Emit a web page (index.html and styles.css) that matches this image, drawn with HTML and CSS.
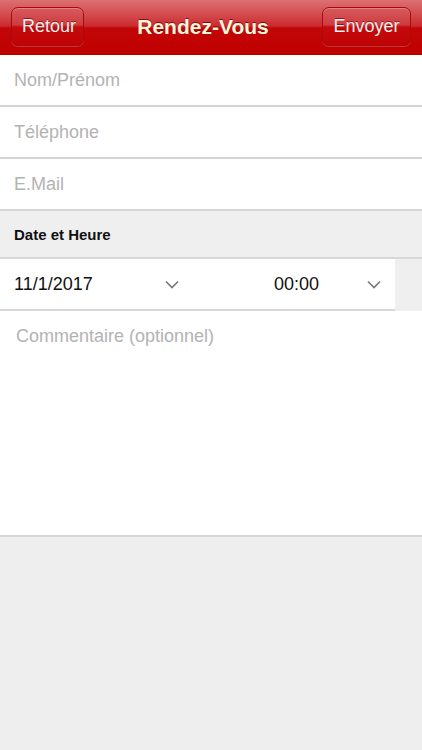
FILE: index.html
```html
<!DOCTYPE html>
<html lang="fr">
<head>
<meta charset="utf-8">
<link rel="stylesheet" href="styles.css">
</head>
<body>
<div class="app">
  <header class="bar">
    <button class="btn">Retour</button>
    <h1 class="title">Rendez-Vous</h1>
    <button class="btn">Envoyer</button>
  </header>
  <div class="field"><span class="ph">Nom/Prénom</span></div>
  <div class="field"><span class="ph">Téléphone</span></div>
  <div class="field"><span class="ph">E.Mail</span></div>
  <div class="section">Date et Heure</div>
  <div class="pickers">
    <div class="picker date">
      <span class="val">11/1/2017</span>
      <svg class="chev" width="14" height="9" viewBox="0 0 14 9"><path d="M1 1.5 L7 7.5 L13 1.5" fill="none" stroke="#777" stroke-width="1.6"/></svg>
    </div>
    <div class="picker time">
      <span class="val">00:00</span>
      <svg class="chev" width="14" height="9" viewBox="0 0 14 9"><path d="M1 1.5 L7 7.5 L13 1.5" fill="none" stroke="#777" stroke-width="1.6"/></svg>
    </div>
    <div class="gap"></div>
  </div>
  <div class="comment"><span class="ph">Commentaire (optionnel)</span></div>
  <div class="rest"></div>
</div>
</body>
</html>
```
FILE: styles.css
```css
* { box-sizing: border-box; }
html, body { margin: 0; padding: 0; }
body {
  width: 422px;
  height: 750px;
  background: #eeeeee;
  font-family: "Liberation Sans", Arial, sans-serif;
  overflow: hidden;
}
.app { display: flex; flex-direction: column; height: 750px; }
.bar {
  height: 55px;
  flex: none;
  display: flex;
  align-items: center;
  justify-content: space-between;
  padding: 0 11px 2px 11px;
  background: linear-gradient(to bottom, #dc7072 0%, #d2474b 30%, #cc2a2e 48%, #c20608 52%, #c00000 100%);
  border-bottom: 1px solid #b00000;
}
.btn {
  height: 39px;
  margin-top: 1px;
  padding: 0 10px;
  border-radius: 7px;
  border: 1px solid #a80a0c;
  background: linear-gradient(to bottom, #d65a5d 0%, #cf3c40 45%, #c30a0c 52%, #c00406 100%);
  box-shadow: inset 0 1px 0 rgba(255,255,255,0.25), 0 1px 0 rgba(255,255,255,0.2);
  color: #fbeeee;
  font-family: "Liberation Sans", Arial, sans-serif;
  font-size: 18px;
  text-shadow: 0 -1px 0 rgba(90,0,0,0.6);
}
.btn:first-child { width: 73px; }
.btn:last-child { width: 89px; }
.title {
  margin: 0;
  font-size: 21px;
  font-weight: bold;
  color: #fff6dc;
  text-shadow: 0 -1px 0 rgba(80,0,0,0.7);
  padding-top: 1px;
}
.field {
  height: 52px;
  flex: none;
  background: #fff;
  border-bottom: 2px solid #d5d5d5;
  display: flex;
  align-items: center;
  padding: 0 14px;
}
.ph { color: #b3b3b3; font-size: 18px; }
.section {
  height: 48px;
  flex: none;
  background: #efefef;
  border-bottom: 2px solid #d8d8d8;
  display: flex;
  align-items: center;
  padding: 0 14px;
  font-size: 15px;
  font-weight: bold;
  color: #111;
}
.pickers {
  height: 52px;
  flex: none;
  display: flex;
}
.picker {
  background: #fff;
  border-bottom: 2px solid #d8d8d8;
  display: flex;
  align-items: center;
  font-size: 18px;
  color: #111;
}
.date { width: 196px; padding-left: 14px; }
.date .val { width: 151px; }
.time { width: 199px; padding-left: 78px; }
.time .val { width: 93px; }
.gap { flex: 1; background: #efefef; }
.chev { display: block; margin-top: 1px; }
.comment {
  height: 226px;
  flex: none;
  background: #fff;
  border-bottom: 2px solid #d6d6d6;
  padding: 15px 16px;
}
.rest { flex: 1; background: #eeeeee; }
```
